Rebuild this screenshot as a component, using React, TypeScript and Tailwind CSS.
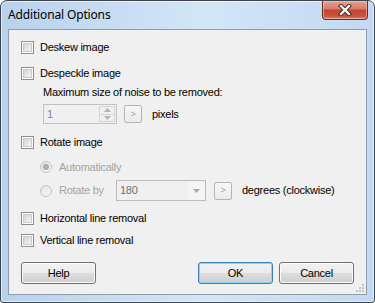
import React from "react";

function CheckBox() {
  return (
    <div className="w-[13px] h-[13px] border border-[#8e8f8f] bg-white p-[1px] shrink-0">
      <div className="w-full h-full border border-[#c7cacf] bg-[linear-gradient(135deg,#d2d5d9,#f4f4f4)]"></div>
    </div>
  );
}

function Radio({ checked }: { checked?: boolean }) {
  return (
    <div className="w-[12px] h-[12px] rounded-full border border-[#c4c4c4] bg-[linear-gradient(135deg,#e2e2e2,#f7f7f7)] flex items-center justify-center shrink-0">
      {checked && <div className="w-[6px] h-[6px] rounded-full bg-[radial-gradient(circle,#b8b8b8,#9c9c9c)]"></div>}
    </div>
  );
}

function SmallButton() {
  return (
    <div className="w-[18px] h-[18px] border border-[#b4b4b4] rounded-[2px] bg-[linear-gradient(#f7f7f7,#ececec)] flex items-center justify-center text-[9px] text-[#a0a0a0] leading-none">
      &gt;
    </div>
  );
}

function Button({ label, isDefault }: { label: string; isDefault?: boolean }) {
  return (
    <div
      className={
        isDefault
          ? "w-[75px] h-[22px] rounded-[3px] border border-[#3c7fb1] shadow-[inset_0_0_0_1px_#8fd2f3] bg-[linear-gradient(#f2f2f2_0%,#ebebeb_50%,#dddddd_51%,#cfcfcf_100%)] flex items-center justify-center text-[11px] text-black"
          : "w-[75px] h-[22px] rounded-[3px] border border-[#707070] shadow-[inset_0_0_0_1px_#fcfcfc] bg-[linear-gradient(#f2f2f2_0%,#ebebeb_50%,#dddddd_51%,#cfcfcf_100%)] flex items-center justify-center text-[11px] text-black"
      }
    >
      {label}
    </div>
  );
}

export default function App() {
  return (
    <div className="w-[375px] h-[303px] flex flex-col border border-[#3a4654] rounded-t-[7px] rounded-b-[3px] overflow-hidden bg-[linear-gradient(90deg,#b9d2ec,#d3e6f7_55%,#c2d9f1)] shadow-[inset_0_0_0_1px_rgba(255,255,255,0.55)] font-['Liberation_Sans',Arial,sans-serif]">
      <div className="h-[28px] flex items-start justify-between shrink-0">
        <div className="pl-[7px] pt-[6px] text-[12px] leading-[16px] tracking-[-0.15px] text-black font-['Noto_Sans',sans-serif]">
          Additional Options
        </div>
        <div className="mr-[6px] w-[46px] h-[19px] rounded-b-[4px] border border-t-0 border-[#6e2b22] bg-[linear-gradient(#e2a294_0%,#d57a68_45%,#c4422f_50%,#c8563f_85%,#dc8a6d_100%)] shadow-[inset_0_0_0_1px_rgba(255,210,200,0.5)] flex items-center justify-center">
          <svg width="14" height="12" viewBox="0 0 14 12">
            <path d="M3 2 L11 10 M11 2 L3 10" stroke="#4a2a28" strokeWidth="4.2" strokeLinecap="square" />
            <path d="M3 2 L11 10 M11 2 L3 10" stroke="#ffffff" strokeWidth="2.2" strokeLinecap="square" />
          </svg>
        </div>
      </div>

      <div className="relative flex-1 mx-[7px] mb-[7px] border border-[#8c9db1] bg-[#f0f0f0] flex flex-col text-[11px] leading-[13px] tracking-[-0.25px] text-black">
        <div className="mt-[11px] pl-[12px] flex items-center h-[13px] gap-[6px]">
          <CheckBox />
          <span>Deskew image</span>
        </div>
        <div className="mt-[13px] pl-[12px] flex items-center h-[13px] gap-[6px]">
          <CheckBox />
          <span>Despeckle image</span>
        </div>
        <div className="mt-[6px] pl-[34px] h-[13px] flex items-center">Maximum size of noise to be removed:</div>
        <div className="mt-[5px] pl-[34px] h-[20px] flex items-center">
          <div className="w-[74px] h-[20px] border border-[#c2c2c2] bg-[#f0f0f0] flex items-center">
            <span className="flex-1 pl-[3px] text-[#877f92]">1</span>
            <div className="w-[16px] h-[16px] mr-[1px] flex flex-col border border-[#d6d6d6]">
              <div className="flex-1 flex items-center justify-center border-b border-[#d6d6d6]">
                <svg width="7" height="4" viewBox="0 0 7 4"><path d="M0 4 L3.5 0 L7 4 Z" fill="#b4b4b4" /></svg>
              </div>
              <div className="flex-1 flex items-center justify-center">
                <svg width="7" height="4" viewBox="0 0 7 4"><path d="M0 0 L3.5 4 L7 0 Z" fill="#b4b4b4" /></svg>
              </div>
            </div>
          </div>
          <div className="ml-[7px]">
            <SmallButton />
          </div>
          <span className="ml-[10px]">pixels</span>
        </div>
        <div className="mt-[12px] pl-[12px] flex items-center h-[13px] gap-[6px]">
          <CheckBox />
          <span>Rotate image</span>
        </div>
        <div className="mt-[12px] pl-[31px] flex items-center h-[12px] gap-[7px] text-[#a3a3a3]">
          <Radio checked />
          <span>Automatically</span>
        </div>
        <div className="mt-[7px] pl-[31px] flex items-center h-[21px] text-[#a3a3a3]">
          <Radio />
          <span className="ml-[7px] w-[57px]">Rotate by</span>
          <div className="w-[90px] h-[21px] border border-[#bcbcbc] bg-[#f0f0f0] flex items-center">
            <span className="flex-1 pl-[3px] text-[#6d6d6d]">180</span>
            <div className="w-[17px] h-full bg-[#f4f4f4] flex items-center justify-center">
              <svg width="7" height="4" viewBox="0 0 7 4"><path d="M0 0 L3.5 4 L7 0 Z" fill="#a9a9a9" /></svg>
            </div>
          </div>
          <div className="ml-[8px]">
            <SmallButton />
          </div>
          <span className="ml-[10px] text-black">degrees (clockwise)</span>
        </div>
        <div className="mt-[11px] pl-[12px] flex items-center h-[13px] gap-[6px]">
          <CheckBox />
          <span>Horizontal line removal</span>
        </div>
        <div className="mt-[9px] pl-[12px] flex items-center h-[13px] gap-[6px]">
          <CheckBox />
          <span>Vertical line removal</span>
        </div>
        <div className="mt-[15px] px-[12px] flex items-center">
          <Button label="Help" />
          <div className="flex-1"></div>
          <Button label="OK" isDefault />
          <div className="ml-[6px]">
            <Button label="Cancel" />
          </div>
        </div>

        <svg className="absolute right-[1px] bottom-[1px]" width="10" height="10" viewBox="0 0 10 10">
          <rect x="7" y="1" width="2" height="2" fill="#c3c3c3" />
          <rect x="4" y="4" width="2" height="2" fill="#c3c3c3" />
          <rect x="7" y="4" width="2" height="2" fill="#c3c3c3" />
          <rect x="1" y="7" width="2" height="2" fill="#c3c3c3" />
          <rect x="4" y="7" width="2" height="2" fill="#c3c3c3" />
          <rect x="7" y="7" width="2" height="2" fill="#c3c3c3" />
        </svg>
      </div>
    </div>
  );
}
